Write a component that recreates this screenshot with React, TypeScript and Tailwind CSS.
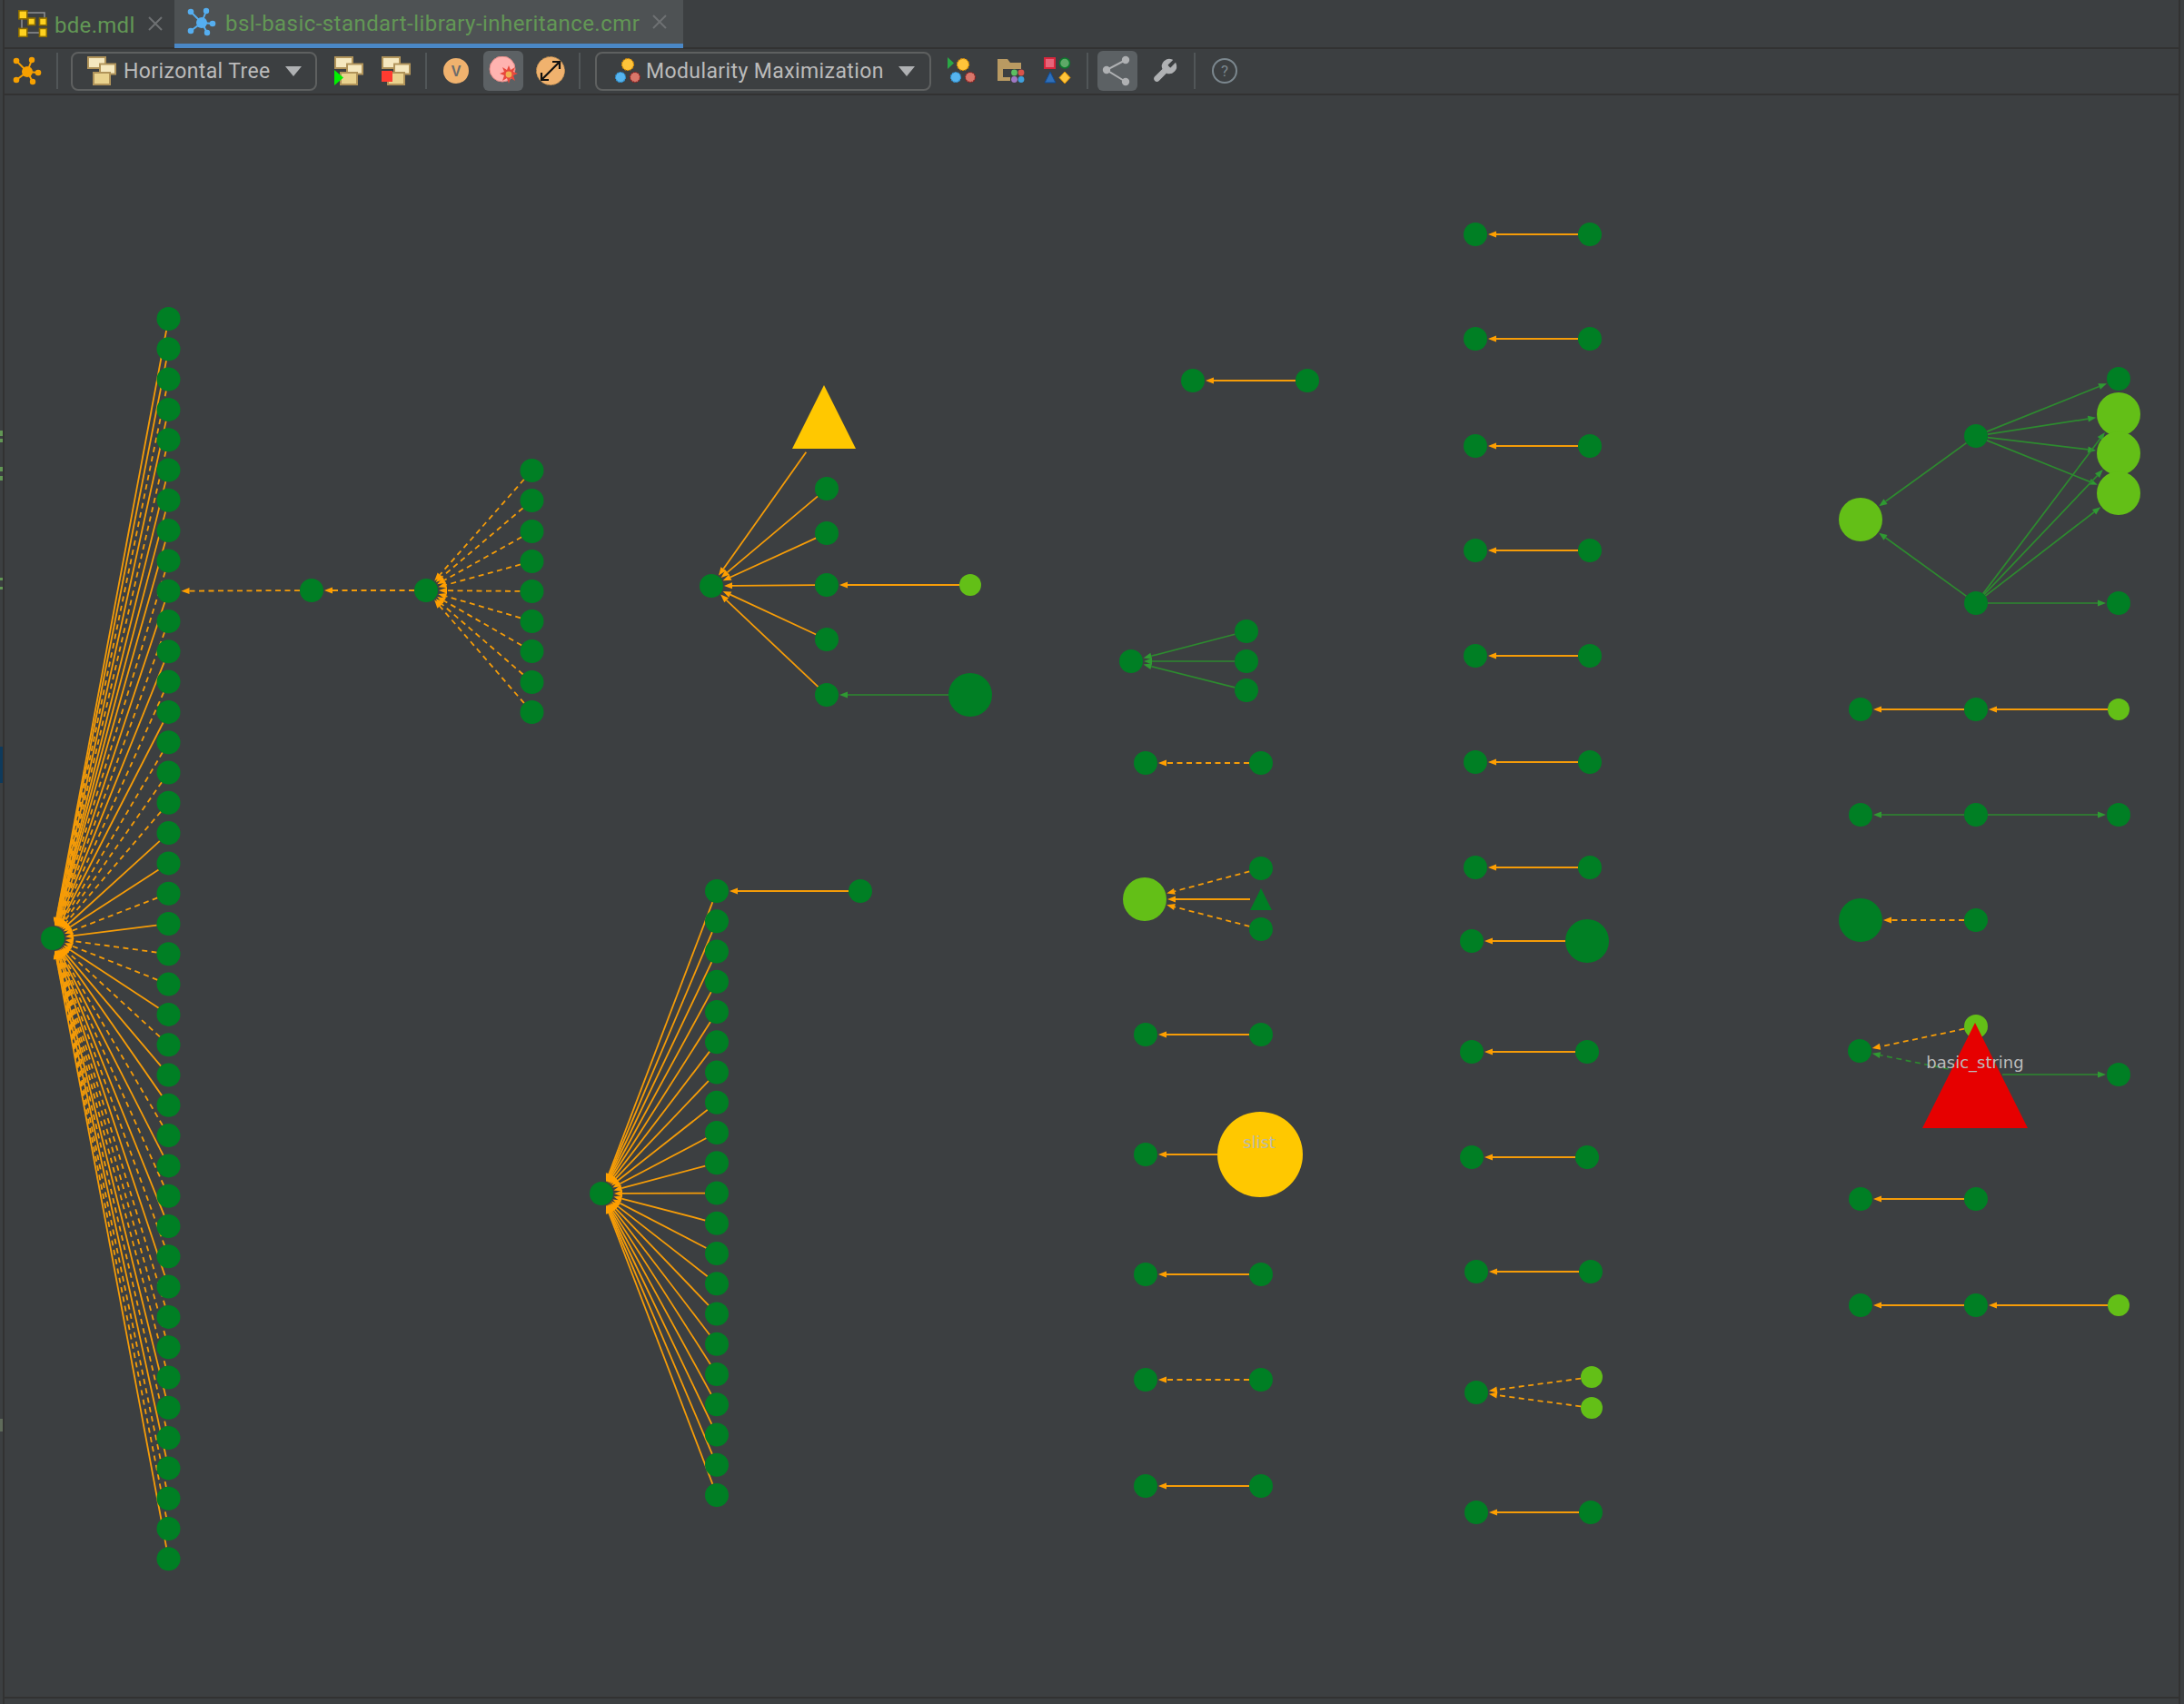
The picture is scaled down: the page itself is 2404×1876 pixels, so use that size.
import type { ReactNode } from 'react'

const DARK = '#007f24'
const LIGHT = '#63bf17'
const YELLOW = '#ffc800'
const RED = '#e60000'
const ORANGE = '#f59c08'
const GREEN = '#2d8a2f'

type Dot = { x: number; y: number; r: number; fill: string; tri?: [number, number, number] }
type Edge = { from: Dot; to: Dot; color: string; dashed?: boolean }

const dot = (x: number, y: number, fill = DARK, r = 13): Dot => ({ x, y, r, fill })
const big = (x: number, y: number, fill = LIGHT, r = 24): Dot => ({ x, y, r, fill })

const nodes: Dot[] = []
const edges: Edge[] = []

function add(...list: Dot[]) {
  nodes.push(...list)
}
function link(from: Dot, to: Dot, color = ORANGE, dashed = false) {
  edges.push({ from, to, color, dashed })
}

// left fan, d = dashed edge
const leftPattern = 'ssdsdsssdsdsdsdddssdsddsdssdsdsdsdddsdsdds'
const root = dot(58, 1033)
add(root)
const leftKids: Dot[] = []
for (let i = 0; i < 42; i++) {
  const kid = dot(185.5, 351 + i * 33.3)
  leftKids.push(kid)
  add(kid)
  link(kid, root, ORANGE, leftPattern[i] === 'd')
}
const mid1 = dot(343, 650)
const mid2 = dot(469, 650)
add(mid1, mid2)
link(mid1, leftKids[9], ORANGE, true)
link(mid2, mid1, ORANGE, true)
;[518, 551, 585, 618, 651, 684, 717, 751, 784].forEach((y) => {
  const kid = dot(585.5, y)
  add(kid)
  link(kid, mid2, ORANGE, true)
})

// tree with the yellow triangle
const hub3 = dot(783, 645)
const tri3: Dot = { x: 907, y: 470, r: 34, fill: YELLOW, tri: [424, 494, 35] }
add(hub3, tri3)
link(tri3, hub3)
const kids3 = [538, 587, 644, 704, 765].map((y) => dot(910, y))
add(...kids3)
kids3.forEach((k) => link(k, hub3))
const l3 = dot(1068, 644, LIGHT, 12)
const b3 = big(1068, 765, DARK)
add(l3, b3)
link(l3, kids3[2])
link(b3, kids3[4], GREEN)

// bottom fan
const hub4 = dot(662, 1314)
add(hub4)
const kids4: Dot[] = []
for (let i = 0; i < 21; i++) {
  const kid = dot(789, 981 + i * 33.25)
  kids4.push(kid)
  add(kid)
  link(kid, hub4)
}
const far4 = dot(947, 981)
add(far4)
link(far4, kids4[0])

function pair(x1: number, x2: number, y: number, dashed = false, right: Dot = dot(x2, y)) {
  const a = dot(x1, y)
  add(a, right)
  link(right, a, ORANGE, dashed)
}

// middle column
pair(1313, 1439, 419)
const hub5 = dot(1245, 728)
add(hub5)
;[695, 728, 760].forEach((y) => {
  const k = dot(1372, y)
  add(k)
  link(k, hub5, GREEN)
})
pair(1261, 1388, 840, true)
const big5 = big(1260, 990)
const t5: Dot = { x: 1388, y: 990, r: 12, fill: DARK, tri: [978, 1002, 12] }
const up5 = dot(1388, 956)
const dn5 = dot(1388, 1023)
add(big5, t5, up5, dn5)
link(up5, big5, ORANGE, true)
link(t5, big5)
link(dn5, big5, ORANGE, true)
pair(1261, 1388, 1139)
pair(1261, 1387, 1271, false, big(1387, 1271, YELLOW, 47))
pair(1261, 1388, 1403)
pair(1261, 1388, 1519, true)
pair(1261, 1388, 1636)

// column of pairs
;[258, 373, 491, 606, 722, 839, 955].forEach((y) => pair(1624, 1750, y))
pair(1620, 1747, 1036, false, big(1747, 1036, DARK))
pair(1620, 1747, 1158)
pair(1620, 1747, 1274)
pair(1625, 1751, 1400)
const hub6 = dot(1625, 1533)
const up6 = dot(1752, 1516, LIGHT, 12)
const dn6 = dot(1752, 1550, LIGHT, 12)
add(hub6, up6, dn6)
link(up6, hub6, ORANGE, true)
link(dn6, hub6, ORANGE, true)
pair(1625, 1751, 1665)

// green cluster, right side
const g0 = big(2048, 572)
const g1 = dot(2175, 480)
const g2 = dot(2175, 664)
const gr0 = dot(2332, 417)
const gr1 = big(2332, 456)
const gr2 = big(2332, 499)
const gr3 = big(2332, 543)
const gr4 = dot(2332, 664)
add(g0, g1, g2, gr0, gr1, gr2, gr3, gr4)
link(g1, g0, GREEN)
link(g2, g0, GREEN)
;[gr0, gr1, gr2, gr3].forEach((t) => link(g1, t, GREEN))
;[gr1, gr2, gr3, gr4].forEach((t) => link(g2, t, GREEN))

function chain(y: number, lastFill: string, lastR: number) {
  const a = dot(2048, y)
  const b = dot(2175, y)
  const c = dot(2332, y, lastFill, lastR)
  add(a, b, c)
  link(c, b)
  link(b, a)
}
chain(781, LIGHT, 12)
const s1 = dot(2048, 897)
const s2 = dot(2175, 897)
const s3 = dot(2332, 897)
add(s1, s2, s3)
link(s2, s1, GREEN)
link(s2, s3, GREEN)
const b7 = big(2048, 1013, DARK)
const c7 = dot(2175, 1013)
add(b7, c7)
link(c7, b7, ORANGE, true)

const q1 = dot(2047, 1157)
const q2 = dot(2175, 1130, LIGHT)
const q3: Dot = { x: 2174, y: 1183, r: 30, fill: RED, tri: [1126, 1242, 58] }
const q4 = dot(2332, 1183)
add(q1, q2, q3, q4)
link(q2, q1, ORANGE, true)
link(q3, q1, GREEN, true)
link(q3, q4, GREEN)
pair(2048, 2175, 1320)
chain(1437, LIGHT, 12)

function Arrow({ e }: { e: Edge }) {
  const dx = e.to.x - e.from.x
  const dy = e.to.y - e.from.y
  const len = Math.hypot(dx, dy)
  const ux = dx / len
  const uy = dy / len
  const sx = e.from.x + ux * e.from.r
  const sy = e.from.y + uy * e.from.r
  const tx = e.to.x - ux * (e.to.r + 1)
  const ty = e.to.y - uy * (e.to.r + 1)
  const bx = tx - ux * 9
  const by = ty - uy * 9
  const head = `${tx},${ty} ${bx - uy * 3.5},${by + ux * 3.5} ${bx + uy * 3.5},${by - ux * 3.5}`
  return (
    <g>
      <line
        x1={sx}
        y1={sy}
        x2={bx}
        y2={by}
        stroke={e.color}
        strokeWidth={e.color === GREEN ? 1.7 : 1.8}
        strokeDasharray={e.dashed ? '6 4.5' : undefined}
      />
      <polygon points={head} fill={e.color === GREEN ? '#2f9a32' : '#ff9f00'} />
    </g>
  )
}

function Graph() {
  return (
    <svg width={2393} height={1763} viewBox="5 105 2393 1763" className="block">
      {edges.map((e, i) => (
        <Arrow key={i} e={e} />
      ))}
      {nodes.map((n, i) =>
        n.tri ? (
          <polygon
            key={i}
            points={`${n.x},${n.tri[0]} ${n.x - n.tri[2]},${n.tri[1]} ${n.x + n.tri[2]},${n.tri[1]}`}
            fill={n.fill}
          />
        ) : (
          <circle key={i} cx={n.x} cy={n.y} r={n.r} fill={n.fill} />
        ),
      )}
      <text x={2174} y={1176} textAnchor="middle" fontSize={18} fill="#bbbbbb" fontFamily="DejaVu Sans, sans-serif">
        basic_string
      </text>
      <text x={1386} y={1264} textAnchor="middle" fontSize={18} fill="#bbbbaa" fontFamily="DejaVu Sans, sans-serif">
        slist
      </text>
    </svg>
  )
}

function GraphIcon({ color, className }: { color: string; className: string }) {
  return (
    <svg viewBox="0 0 32 32" className={className}>
      <g stroke={color} strokeWidth={2}>
        <line x1="16" y1="17" x2="4" y2="5" />
        <line x1="16" y1="17" x2="21" y2="4" />
        <line x1="16" y1="17" x2="28" y2="18" />
        <line x1="16" y1="17" x2="22" y2="28" />
        <line x1="16" y1="17" x2="4" y2="26" />
      </g>
      <g fill={color}>
        <circle cx="16" cy="17" r="6" />
        <circle cx="4" cy="5" r="3.3" />
        <circle cx="21" cy="4" r="3.2" />
        <circle cx="28" cy="18" r="3.3" />
        <circle cx="22" cy="28" r="3.2" />
        <circle cx="4" cy="26" r="3.3" />
      </g>
    </svg>
  )
}

function ModelIcon() {
  const boxes = [
    [0.8, 0.8, 9, 9],
    [11, 9, 7.5, 7.5],
    [23.5, 9, 7.8, 7.8],
    [0.8, 20.4, 9, 9],
    [23.5, 20.4, 7.8, 9],
  ]
  return (
    <svg viewBox="0 0 32 30" className="h-[30px] w-[32px]">
      <path d="M8 3H29V10M4 9V22M9 25H25" fill="none" stroke="#8d9092" strokeWidth={1.5} />
      {boxes.map(([x, y, w, h], i) => (
        <rect key={i} x={x} y={y} width={w} height={h} fill="#ffd21f" stroke="#8a6b00" strokeWidth={1.6} />
      ))}
    </svg>
  )
}

function StackIcon({ mark }: { mark?: 'run' | 'stop' }) {
  const boxes = [
    [1, 1, 19, 12],
    [14, 8.5, 17, 11],
    [7, 18, 18, 13],
  ]
  return (
    <svg viewBox="0 0 32 32" className="h-8 w-8">
      {boxes.map(([x, y, w, h], i) => (
        <rect key={i} x={x} y={y} width={w} height={h} fill={i === 2 ? '#e9d28e' : '#f5e8bf'} stroke="#b1945a" strokeWidth={2} />
      ))}
      {mark === 'run' && <polygon points="0,15 0,32 10,23.5" fill="#00f000" />}
      {mark === 'stop' && <rect x="0" y="16" width="12" height="12" fill="#ff3b30" />}
    </svg>
  )
}

function Octagon({ cx, cy, r, fill, edge }: { cx: number; cy: number; r: number; fill: string; edge: string }) {
  return <circle cx={cx} cy={cy} r={r} fill={fill} stroke={edge} strokeWidth={1.2} strokeDasharray="2 1" />
}

function ClusterIcon({ run }: { run?: boolean }) {
  return (
    <svg viewBox="0 0 34 30" className="h-[30px] w-[34px]">
      {run && <polygon points="0,0 0,13 7,6.5" fill="#2aa845" />}
      <Octagon cx={17} cy={8} r={6.5} fill="#ffc43a" edge="#d88c00" />
      <Octagon cx={9} cy={22} r={5.5} fill="#56b4ee" edge="#2d8fd0" />
      <Octagon cx={25} cy={22} r={5.5} fill="#d9776a" edge="#8c1f1f" />
    </svg>
  )
}

function FolderDots() {
  return (
    <svg viewBox="0 0 30 26" className="h-[26px] w-[30px]">
      <path d="M0 0H11L14 4H26V11H6V20H14V24H0Z" fill="#b99a62" />
      <circle cx="18.5" cy="15" r="3.4" fill="#5cbf62" />
      <circle cx="26" cy="15" r="3.4" fill="#d9534a" />
      <circle cx="18.5" cy="22.5" r="3.4" fill="#a078c4" />
      <circle cx="26" cy="22.5" r="3.4" fill="#3f9fdc" />
    </svg>
  )
}

function ShapesIcon() {
  return (
    <svg viewBox="0 0 30 30" className="h-[30px] w-[30px]">
      <rect x="1" y="1" width="11" height="11" fill="#e8647a" stroke="#d8263c" strokeWidth={2} />
      <circle cx="23" cy="6.5" r="5.5" fill="#5ea868" stroke="#0a7a2c" strokeWidth={1.5} />
      <polygon points="7,16 13,28 1,28" fill="#2f6fb8" stroke="#0d4a96" strokeWidth={1} />
      <polygon points="23,16 29,22.5 23,29 17,22.5" fill="#ffc43a" stroke="#d88c00" strokeWidth={1} />
    </svg>
  )
}

function ComboArrow() {
  return (
    <svg viewBox="0 0 18 11" className="h-[11px] w-[18px]">
      <polygon points="0,0 18,0 9,11" fill="#afb1b3" />
    </svg>
  )
}

function Combo({ icon, label, width, labelGap, arrowGap }: { icon: ReactNode; label: string; width: string; labelGap: string; arrowGap: string }) {
  return (
    <div className={`flex h-[43px] items-center rounded-lg border-2 border-[#5e6060] ${width}`}>
      {icon}
      <span className={`pt-[2px] font-['Roboto',sans-serif] text-[23px] tracking-[0.4px] text-[#bbbbbb] ${labelGap}`}>{label}</span>
      <span className={arrowGap}>
        <ComboArrow />
      </span>
    </div>
  )
}

function Tool({ children, active, className }: { children: ReactNode; active?: boolean; className: string }) {
  return (
    <div className={`flex h-11 w-11 items-center justify-center rounded-md ${active ? 'bg-[#5c6164]' : ''} ${className}`}>{children}</div>
  )
}

function Sep({ className }: { className: string }) {
  return <div className={`h-10 w-0.5 bg-[#515658] ${className}`} />
}

function CloseX({ className }: { className: string }) {
  return (
    <svg viewBox="0 0 16 16" className={`h-4 w-4 ${className}`}>
      <path d="M1 1L15 15M15 1L1 15" stroke="#6e7173" strokeWidth={2} />
    </svg>
  )
}

export default function App() {
  return (
    <div className="flex h-[1876px] w-[2404px] overflow-hidden bg-[#3c3f41]">
      <div className="w-[3px] shrink-0">
        <div className="mt-[474px] h-[6px] bg-[#629755]" />
        <div className="mt-[3px] h-[4px] bg-[#629755]" />
        <div className="mt-[27px] h-[5px] bg-[#629755]" />
        <div className="mt-[5px] h-[5px] bg-[#629755]" />
        <div className="mt-[107px] h-[3px] bg-[#629755]" />
        <div className="mt-[7px] h-[3px] bg-[#629755]" />
        <div className="mt-[173px] h-[40px] bg-[#0e3a5c]" />
        <div className="mt-[700px] h-[14px] bg-[#5f6b5a]" />
      </div>
      <div className="flex w-[2397px] shrink-0 flex-col border-x-2 border-[#323232]">
        <div className="flex h-[54px] shrink-0 border-b-2 border-[#323232]">
          <div className="flex w-[187px] items-center">
            <div className="ml-[15px]">
              <ModelIcon />
            </div>
            <span className="ml-2 pt-[3px] font-['Roboto',sans-serif] text-[24px] tracking-[0.3px] text-[#629755]">bde.mdl</span>
            <CloseX className="ml-[14px]" />
          </div>
          <div className="relative z-10 flex h-[53px] w-[560px] items-center border-b-[5px] border-[#4a88c7] bg-[#4e5254]">
            <GraphIcon color="#55aef0" className="ml-[14px] h-8 w-8" />
            <span className="ml-[10px] pt-[3px] font-['Roboto',sans-serif] text-[24px] tracking-[0.45px] whitespace-nowrap text-[#629755]">
              bsl-basic-standart-library-inheritance.cmr
            </span>
            <CloseX className="ml-[14px]" />
          </div>
        </div>
        <div className="flex h-[51px] shrink-0 items-center border-b-2 border-[#323232] pb-px pl-[3px]">
          <Tool className="">
            <GraphIcon color="#f7a000" className="h-8 w-8" />
          </Tool>
          <Sep className="ml-[10px]" />
          <div className="ml-[14px]">
            <Combo
              icon={
                <span className="ml-4">
                  <StackIcon />
                </span>
              }
              label="Horizontal Tree"
              width="w-[271px]"
              labelGap="ml-2"
              arrowGap="ml-4"
            />
          </div>
          <Tool className="ml-[13px]">
            <StackIcon mark="run" />
          </Tool>
          <Tool className="ml-2">
            <StackIcon mark="stop" />
          </Tool>
          <Sep className="ml-[10px]" />
          <Tool className="ml-[10px]">
            <svg viewBox="0 0 28 28" className="h-7 w-7">
              <circle cx="14" cy="14" r="14" fill="#f0b26e" />
              <text x="14" y="20" textAnchor="middle" fontSize="16" fontWeight="700" fill="#6b6b6b" fontFamily="Liberation Sans, sans-serif">
                V
              </text>
            </svg>
          </Tool>
          <Tool active className="ml-2">
            <svg viewBox="0 0 32 32" className="h-8 w-8">
              <circle cx="15" cy="14" r="14" fill="#ffb3b0" stroke="#e58a86" strokeWidth={1} />
              <polygon
                points="22,10 24,15 29,12 27,17 32,19 27,21 29,27 24,24 22,30 20,24 15,27 17,21 12,19 17,17 15,12 20,15"
                fill="#e8483c"
              />
              <circle cx="22" cy="20" r="3.4" fill="#f0b050" />
            </svg>
          </Tool>
          <Tool className="ml-2">
            <svg viewBox="0 0 32 32" className="h-8 w-8">
              <circle cx="16" cy="16" r="15.5" fill="#f0b26e" stroke="#b98a4e" strokeWidth={1} strokeDasharray="3 1.5" />
              <path d="M6 26L26 6M18 6H26V14M6 18V26H14" fill="none" stroke="#111111" strokeWidth={2.2} />
            </svg>
          </Tool>
          <Sep className="ml-[9px]" />
          <div className="ml-4">
            <Combo
              icon={
                <span className="ml-[17px]">
                  <ClusterIcon />
                </span>
              }
              label="Modularity Maximization"
              width="w-[370px]"
              labelGap="ml-[3px]"
              arrowGap="ml-4"
            />
          </div>
          <Tool className="ml-[13px]">
            <ClusterIcon run />
          </Tool>
          <Tool className="ml-[9px]">
            <FolderDots />
          </Tool>
          <Tool className="ml-[7px]">
            <ShapesIcon />
          </Tool>
          <Sep className="ml-[10px]" />
          <Tool active className="ml-[10px]">
            <svg viewBox="0 0 44 44" className="h-11 w-11">
              <path d="M31 10L10 21L31 34" fill="none" stroke="#afb1b3" strokeWidth={2} />
              <circle cx="31" cy="10" r="4.2" fill="#afb1b3" />
              <circle cx="10" cy="21" r="4.2" fill="#afb1b3" />
              <circle cx="31" cy="34" r="4.2" fill="#afb1b3" />
            </svg>
          </Tool>
          <Tool className="ml-2">
            <svg viewBox="0 0 24 24" className="h-[30px] w-[30px]">
              <path
                d="M14.7 6.3a1 1 0 0 0 0 1.4l1.6 1.6a1 1 0 0 0 1.4 0l3.77-3.77a6 6 0 0 1-7.94 7.94l-6.91 6.91a2.12 2.12 0 0 1-3-3l6.91-6.91a6 6 0 0 1 7.94-7.94l-3.76 3.76z"
                fill="#afb1b3"
                stroke="#afb1b3"
                strokeWidth={1}
              />
            </svg>
          </Tool>
          <Sep className="ml-[10px]" />
          <Tool className="ml-[10px]">
            <svg viewBox="0 0 28 28" className="h-7 w-7">
              <circle cx="14" cy="14" r="13" fill="none" stroke="#7b878e" strokeWidth={2} />
              <text x="14" y="20" textAnchor="middle" fontSize="17" fill="#7b878e" fontFamily="Roboto, sans-serif">
                ?
              </text>
            </svg>
          </Tool>
        </div>
        <div className="box-content h-[1763px] shrink-0 border-b-2 border-[#323232]">
          <Graph />
        </div>
      </div>
    </div>
  )
}
